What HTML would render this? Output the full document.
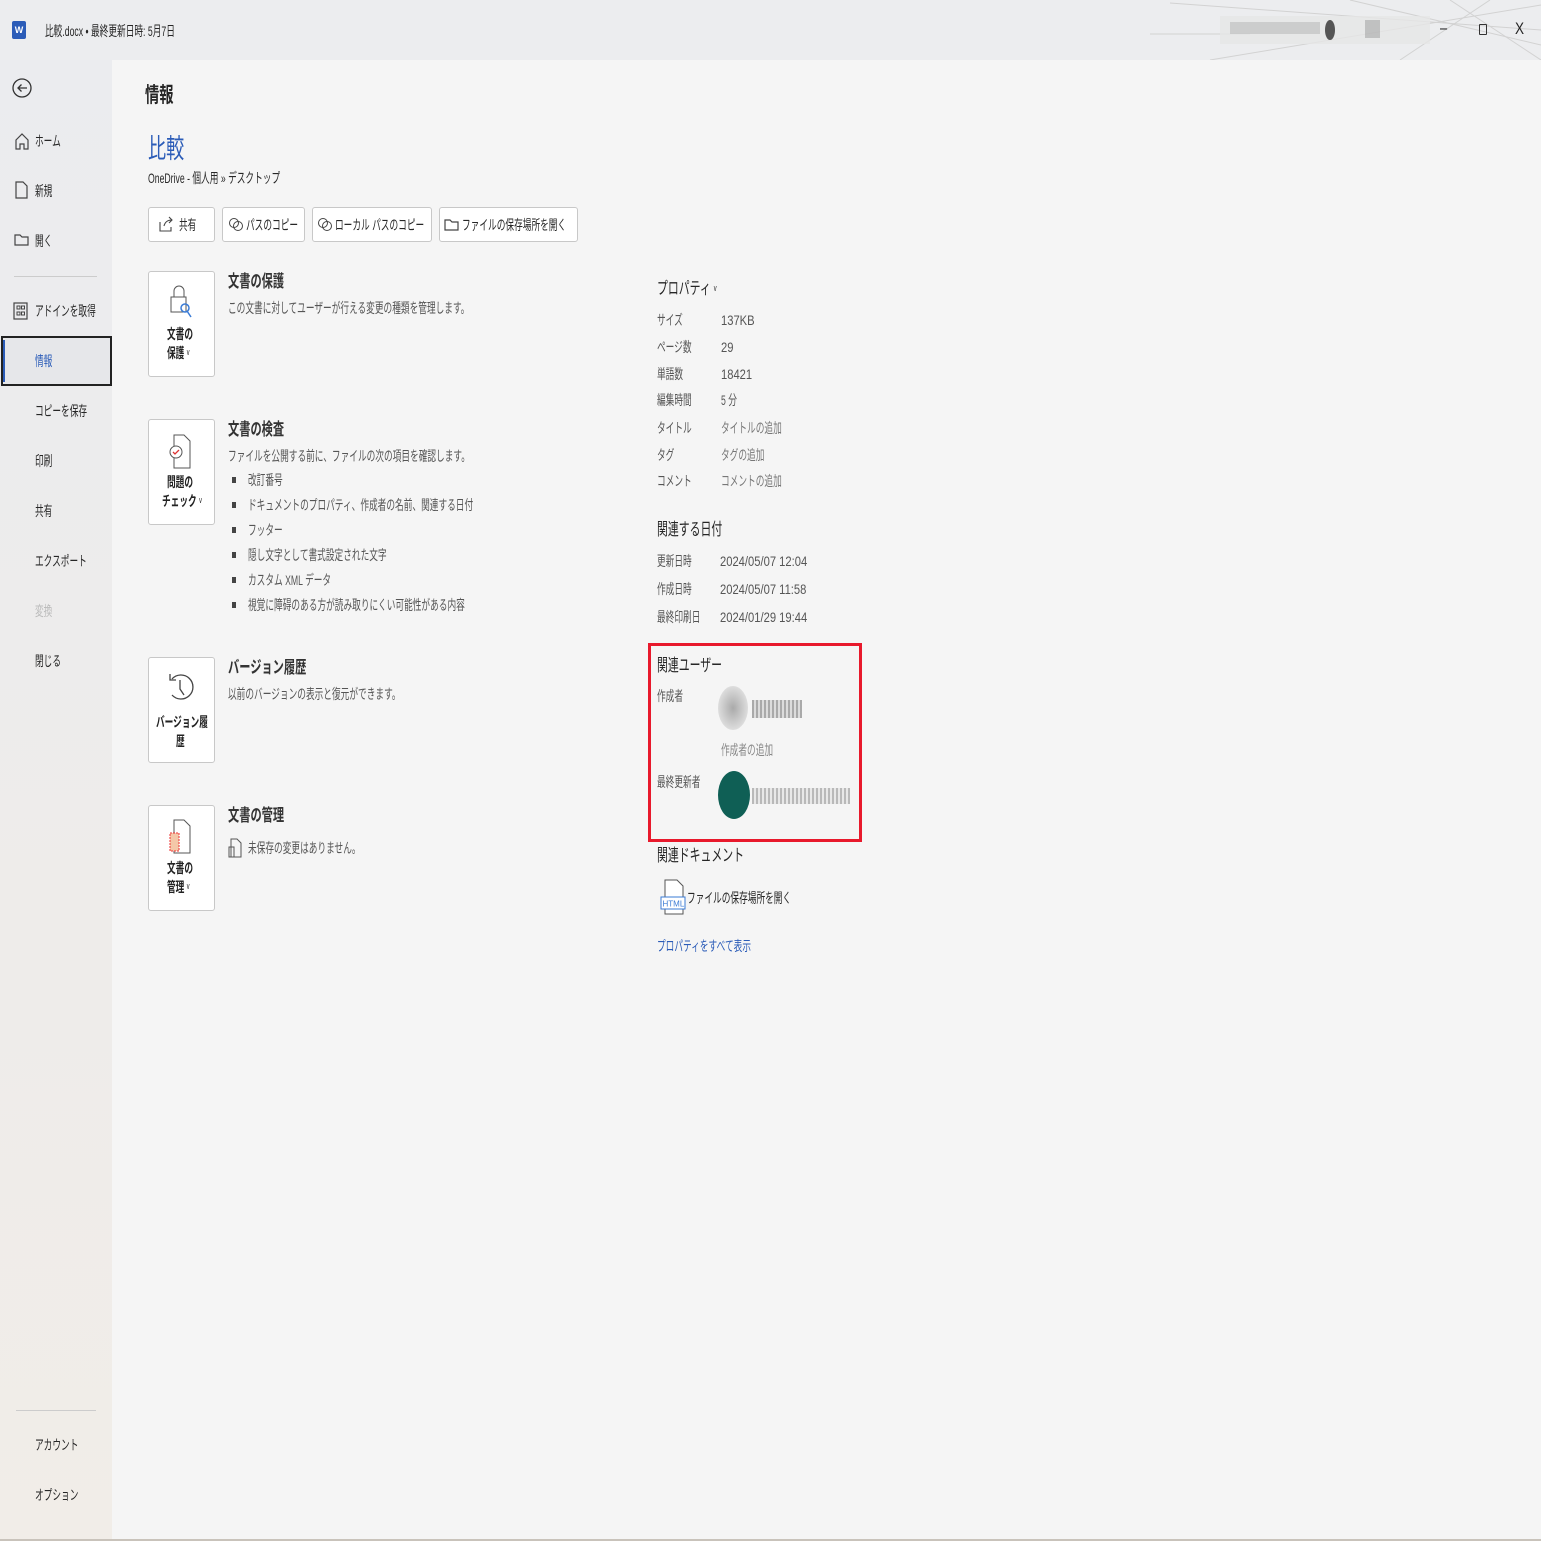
<!DOCTYPE html>
<html><head><meta charset="utf-8"><style>
*{margin:0;padding:0;box-sizing:border-box}
body{width:1541px;height:1541px;position:relative;overflow:hidden;background:#f5f5f5;font-family:"Liberation Sans","Noto Sans CJK JP",sans-serif;color:#262626}
.a{position:absolute;white-space:nowrap;transform:scaleX(.62);transform-origin:0 0;font-size:14px;line-height:18px}
.n{transform:scaleX(.8)}
.tb{position:absolute;left:0;top:0;width:1541px;height:60px;background:#ecedef}
.sb{position:absolute;left:0;top:60px;width:112px;height:1481px;background:linear-gradient(#ebecef,#eeecea 60%,#f1ede8)}
.btn{position:absolute;top:207px;height:35px;border:1px solid #c8c8c8;border-radius:3px;background:#fff}
.big{position:absolute;left:148px;width:67px;height:106px;border:1px solid #c8c8c8;border-radius:3px;background:#fff}
.bl{font-weight:bold;font-size:14px;color:#222;line-height:19px}
.h{font-size:17px;font-weight:bold;color:#333;transform:scaleX(.66)}
.g{color:#555}
.bul{position:absolute;left:232px;width:4px;height:6px;background:#444}
.v{display:inline-block;font-size:9px;font-weight:normal;transform:translateY(-3px)}
</style></head><body>
<div class="tb"></div>
<svg style="position:absolute;left:1150px;top:0" width="391" height="60"><g stroke="#d2d2d2" stroke-width="1"><line x1="0" y1="34" x2="100" y2="34"/><line x1="20" y1="3" x2="391" y2="30"/><line x1="200" y1="0" x2="391" y2="45"/><line x1="60" y1="60" x2="391" y2="5"/><line x1="250" y1="60" x2="340" y2="0"/><line x1="300" y1="0" x2="391" y2="60"/></g><rect x="70" y="16" width="210" height="28" fill="#e6e6e6" opacity=".8"/><rect x="80" y="22" width="90" height="12" fill="#9a9a9a" opacity=".35"/><ellipse cx="180" cy="30" rx="5" ry="10" fill="#555"/><rect x="215" y="20" width="15" height="18" fill="#888" opacity=".4"/></svg>
<div class="a n" style="left:1440px;top:20px;font-size:16px">–</div>
<div style="position:absolute;left:1479px;top:24px;width:8px;height:11px;border:1.5px solid #333;border-radius:1px"></div>
<div class="a n" style="left:1515px;top:20px;font-size:17px">X</div>
<div style="position:absolute;left:12px;top:21px;width:14px;height:18px;background:#2b5cb8;border-radius:2px;color:#fff;font-size:9px;font-weight:bold;line-height:18px;text-align:center">W</div>
<div class="a" style="left:45px;top:22px">比較.docx • 最終更新日時: 5月7日</div>

<div class="sb"></div>
<svg style="position:absolute;left:12px;top:76px" width="22" height="24"><circle cx="10" cy="12" r="9" fill="none" stroke="#333" stroke-width="1.3"/><path d="M15 12H6M9.5 8.5L6 12l3.5 3.5" fill="none" stroke="#333" stroke-width="1.3"/></svg>
<svg style="position:absolute;left:14px;top:132px" width="16" height="18"><path d="M2 8L8 2l6 6v9H10v-5H6v5H2z" fill="none" stroke="#444" stroke-width="1.2"/></svg>
<div class="a" style="left:35px;top:132px">ホーム</div>
<svg style="position:absolute;left:15px;top:181px" width="14" height="18"><path d="M1 1h7l4 4v12H1z" fill="none" stroke="#444" stroke-width="1.2"/></svg>
<div class="a" style="left:35px;top:182px">新規</div>
<svg style="position:absolute;left:14px;top:233px" width="16" height="14"><path d="M1 2h5l2 2h6v8H1z" fill="none" stroke="#444" stroke-width="1.2"/></svg>
<div class="a" style="left:35px;top:232px">開く</div>
<div style="position:absolute;left:14px;top:276px;width:83px;height:1px;background:#ccc"></div>
<svg style="position:absolute;left:13px;top:302px" width="16" height="18"><rect x="1" y="1" width="13" height="16" fill="none" stroke="#444" stroke-width="1.2"/><rect x="4" y="4" width="3" height="3" fill="none" stroke="#444"/><rect x="8.5" y="4" width="3" height="3" fill="none" stroke="#444"/><rect x="4" y="10" width="3" height="3" fill="none" stroke="#444"/><rect x="8.5" y="10" width="3" height="3" fill="none" stroke="#444"/></svg>
<div class="a" style="left:35px;top:302px">アドインを取得</div>
<div style="position:absolute;left:1px;top:336px;width:111px;height:50px;border:2px solid #222;background:#e6e7ea"></div>
<div style="position:absolute;left:3px;top:340px;width:2px;height:42px;background:#2b5cb8"></div>
<div class="a" style="left:35px;top:352px;color:#2b5cb8">情報</div>
<div class="a" style="left:35px;top:402px">コピーを保存</div>
<div class="a" style="left:35px;top:452px">印刷</div>
<div class="a" style="left:35px;top:502px">共有</div>
<div class="a" style="left:35px;top:552px">エクスポート</div>
<div class="a" style="left:35px;top:602px;color:#bbb">変換</div>
<div class="a" style="left:35px;top:652px">閉じる</div>
<div style="position:absolute;left:16px;top:1410px;width:80px;height:1px;background:#ccc"></div>
<div class="a" style="left:35px;top:1436px">アカウント</div>
<div class="a" style="left:35px;top:1486px">オプション</div>
<div style="position:absolute;left:0;top:1539px;width:1541px;height:2px;background:#c9c3bb"></div>

<div class="a" style="left:145px;top:83px;font-size:21px;line-height:26px;font-weight:bold;transform:scaleX(.68)">情報</div>
<div class="a" style="left:148px;top:133px;font-size:27px;line-height:32px;color:#2b5cb8;transform:scaleX(.67)">比較</div>
<div class="a" style="left:148px;top:169px">OneDrive - 個人用 » デスクトップ</div>

<div class="btn" style="left:148px;width:67px"></div>
<svg style="position:absolute;left:158px;top:215px" width="16" height="18"><path d="M2 7v9h11v-4M6 11c1-4 4-6 8-6M11 2l3 3-3 3" fill="none" stroke="#444" stroke-width="1.1"/></svg>
<div class="a" style="left:179px;top:216px">共有</div>
<div class="btn" style="left:222px;width:83px"></div>
<svg style="position:absolute;left:228px;top:217px" width="16" height="14"><circle cx="6" cy="6" r="4.5" fill="none" stroke="#444"/><circle cx="10" cy="9" r="4.5" fill="none" stroke="#444"/></svg>
<div class="a" style="left:246px;top:216px">パスのコピー</div>
<div class="btn" style="left:312px;width:120px"></div>
<svg style="position:absolute;left:317px;top:217px" width="16" height="14"><circle cx="6" cy="6" r="4.5" fill="none" stroke="#444"/><circle cx="10" cy="9" r="4.5" fill="none" stroke="#444"/></svg>
<div class="a" style="left:335px;top:216px">ローカル パスのコピー</div>
<div class="btn" style="left:439px;width:139px"></div>
<svg style="position:absolute;left:444px;top:218px" width="16" height="14"><path d="M1 2h5l2 2h6v8H1z" fill="none" stroke="#444" stroke-width="1.2"/></svg>
<div class="a" style="left:462px;top:216px">ファイルの保存場所を開く</div>

<div class="big" style="top:271px"></div>
<svg style="position:absolute;left:168px;top:285px" width="30" height="40"><path d="M6 12V6a5 5 0 0 1 10 0v6" fill="none" stroke="#555"/><rect x="3" y="12" width="15" height="15" fill="#fff" stroke="#555"/><circle cx="17" cy="23" r="4" fill="none" stroke="#3a7bd5" stroke-width="1.5"/><path d="M19 26l4 6" stroke="#3a7bd5" stroke-width="1.5"/></svg>
<div class="a bl" style="left:167px;top:325px">文書の</div>
<div class="a bl" style="left:167px;top:344px">保護 <span class="v">v</span></div>
<div class="a h" style="left:228px;top:273px">文書の保護</div>
<div class="a g" style="left:228px;top:299px">この文書に対してユーザーが行える変更の種類を管理します。</div>

<div class="big" style="top:419px"></div>
<svg style="position:absolute;left:166px;top:434px" width="30" height="36"><path d="M8 1h10l6 6v27H8z" fill="#fff" stroke="#555"/><circle cx="10" cy="18" r="6" fill="#fff" stroke="#555"/><path d="M7 18l2 2 4-4" fill="none" stroke="#d33" stroke-width="1.3"/></svg>
<div class="a bl" style="left:167px;top:473px">問題の</div>
<div class="a bl" style="left:162px;top:492px">チェック <span class="v">v</span></div>
<div class="a h" style="left:228px;top:421px">文書の検査</div>
<div class="a g" style="left:228px;top:447px">ファイルを公開する前に、ファイルの次の項目を確認します。</div>
<div class="bul" style="top:477px"></div><div class="a g" style="left:248px;top:471px">改訂番号</div>
<div class="bul" style="top:502px"></div><div class="a g" style="left:248px;top:496px">ドキュメントのプロパティ、作成者の名前、関連する日付</div>
<div class="bul" style="top:527px"></div><div class="a g" style="left:248px;top:521px">フッター</div>
<div class="bul" style="top:552px"></div><div class="a g" style="left:248px;top:546px">隠し文字として書式設定された文字</div>
<div class="bul" style="top:577px"></div><div class="a g" style="left:248px;top:571px">カスタム XML データ</div>
<div class="bul" style="top:602px"></div><div class="a g" style="left:248px;top:596px">視覚に障碍のある方が読み取りにくい可能性がある内容</div>

<div class="big" style="top:657px"></div>
<svg style="position:absolute;left:166px;top:671px" width="30" height="36"><path d="M6 8A12 12 0 1 1 6 24" fill="none" stroke="#444" stroke-width="1.3"/><path d="M4 3v6h6" fill="none" stroke="#444" stroke-width="1.3"/><path d="M14 9v9l4 6" fill="none" stroke="#444" stroke-width="1.3"/></svg>
<div class="a bl" style="left:156px;top:713px">バージョン履</div>
<div class="a bl" style="left:176px;top:732px">歴</div>
<div class="a h" style="left:228px;top:659px">バージョン履歴</div>
<div class="a g" style="left:228px;top:685px">以前のバージョンの表示と復元ができます。</div>

<div class="big" style="top:805px"></div>
<svg style="position:absolute;left:166px;top:819px" width="30" height="36"><path d="M8 1h10l6 6v27H8z" fill="#fff" stroke="#555"/><rect x="4" y="14" width="9" height="18" fill="#f4c7a8" stroke="#e33" stroke-dasharray="2 1"/></svg>
<div class="a bl" style="left:167px;top:859px">文書の</div>
<div class="a bl" style="left:167px;top:878px">管理 <span class="v">v</span></div>
<div class="a h" style="left:228px;top:807px">文書の管理</div>
<svg style="position:absolute;left:228px;top:838px" width="14" height="20"><path d="M3 1h6l4 4v14H3z" fill="none" stroke="#555"/><rect x="1" y="9" width="5" height="10" fill="none" stroke="#555"/></svg>
<div class="a g" style="left:248px;top:839px">未保存の変更はありません。</div>

<div class="a" style="left:657px;top:279px;font-size:17px;line-height:20px;transform:scaleX(.64)">プロパティ <span class="v">v</span></div>
<div class="a g" style="left:657px;top:311px">サイズ</div><div class="a g n" style="left:721px;top:311px">137KB</div>
<div class="a g" style="left:657px;top:338px">ページ数</div><div class="a g n" style="left:721px;top:338px">29</div>
<div class="a g" style="left:657px;top:365px">単語数</div><div class="a g n" style="left:721px;top:365px">18421</div>
<div class="a g" style="left:657px;top:391px">編集時間</div><div class="a g" style="left:721px;top:391px">5 分</div>
<div class="a g" style="left:657px;top:419px">タイトル</div><div class="a" style="left:721px;top:419px;color:#777">タイトルの追加</div>
<div class="a g" style="left:657px;top:446px">タグ</div><div class="a" style="left:721px;top:446px;color:#777">タグの追加</div>
<div class="a g" style="left:657px;top:472px">コメント</div><div class="a" style="left:721px;top:472px;color:#777">コメントの追加</div>
<div class="a" style="left:657px;top:520px;font-size:17px;line-height:20px;transform:scaleX(.64)">関連する日付</div>
<div class="a g" style="left:657px;top:552px">更新日時</div><div class="a g n" style="left:720px;top:552px">2024/05/07 12:04</div>
<div class="a g" style="left:657px;top:580px">作成日時</div><div class="a g n" style="left:720px;top:580px">2024/05/07 11:58</div>
<div class="a g" style="left:657px;top:608px">最終印刷日</div><div class="a g n" style="left:720px;top:608px">2024/01/29 19:44</div>

<div style="position:absolute;left:648px;top:643px;width:214px;height:199px;border:3px solid #e8192c"></div>
<div class="a" style="left:657px;top:656px;font-size:17px;line-height:20px;transform:scaleX(.64)">関連ユーザー</div>
<div class="a g" style="left:657px;top:687px">作成者</div>
<div style="position:absolute;left:718px;top:686px;width:30px;height:44px;border-radius:50%;background:radial-gradient(#aaa,#ddd 70%,transparent)"></div>
<div style="position:absolute;left:752px;top:700px;width:50px;height:18px;background:repeating-linear-gradient(90deg,#777 0 2px,#ccc 2px 4px);opacity:.6"></div>
<div class="a" style="left:721px;top:741px;color:#888">作成者の追加</div>
<div class="a g" style="left:657px;top:773px">最終更新者</div>
<div style="position:absolute;left:718px;top:771px;width:32px;height:48px;border-radius:50%;background:#0f5f55"></div>
<div style="position:absolute;left:752px;top:788px;width:98px;height:16px;background:repeating-linear-gradient(90deg,#888 0 2px,#ddd 2px 4px);opacity:.55"></div>

<div class="a" style="left:657px;top:846px;font-size:17px;line-height:20px;transform:scaleX(.64)">関連ドキュメント</div>
<svg style="position:absolute;left:660px;top:879px" width="28" height="38"><path d="M5 1h12l6 6v28H5z" fill="#fff" stroke="#555"/><rect x="1" y="18" width="24" height="12" fill="#fff" stroke="#3a7bd5"/><text x="2.5" y="27.5" font-size="8" font-family="Liberation Sans" fill="#3a7bd5">HTML</text></svg>
<div class="a" style="left:687px;top:889px">ファイルの保存場所を開く</div>
<div class="a" style="left:657px;top:937px;color:#2b5cb8">プロパティをすべて表示</div>
</body></html>
